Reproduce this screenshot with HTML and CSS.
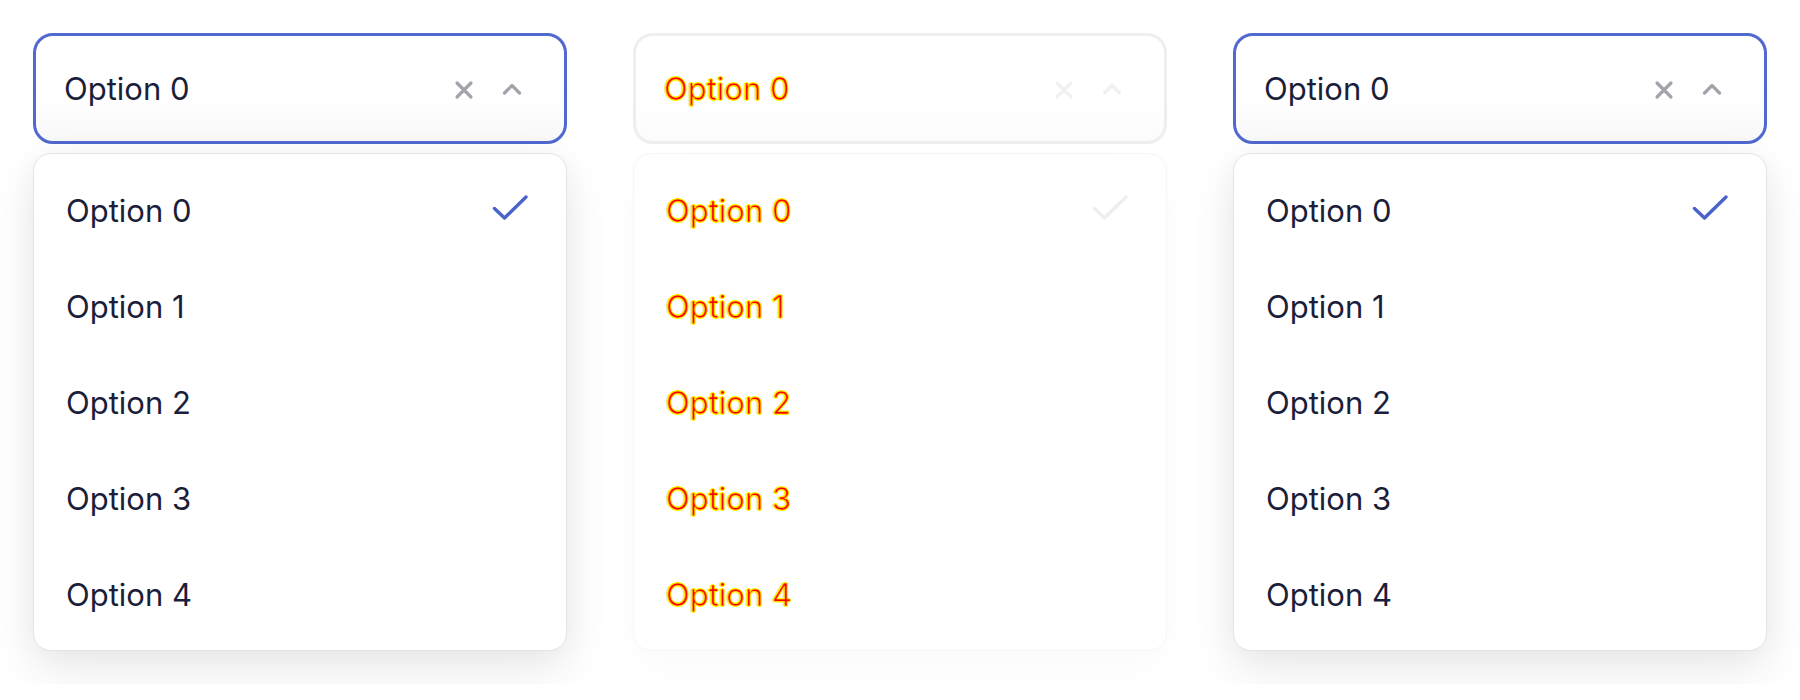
FILE: index.html
```html
<!DOCTYPE html>
<html lang="en">
<head>
<meta charset="utf-8">
<title>Select</title>
<link rel="stylesheet" href="styles.css">
</head>
<body>
<div class="row">
  <div class="select">
    <div class="trigger">
      <span class="value">Option 0</span>
      <div class="icons">
        <svg class="ic-x" width="20" height="20" viewBox="0 0 20 20"><path d="M3 3L17 17M17 3L3 17"/></svg>
        <svg class="ic-chev" width="20" height="12" viewBox="0 0 20 12"><path d="M2.5 10L10 2.5L17.5 10"/></svg>
      </div>
    </div>
    <ul class="menu">
      <li class="option"><span>Option 0</span><svg class="check" width="36" height="26" viewBox="0 0 36 26"><path d="M2.5 13.5L12.5 23L34 2"/></svg></li>
      <li class="option"><span>Option 1</span></li>
      <li class="option"><span>Option 2</span></li>
      <li class="option"><span>Option 3</span></li>
      <li class="option"><span>Option 4</span></li>
    </ul>
  </div>

  <div class="select ghost">
    <div class="trigger">
      <span class="value">Option 0</span>
      <div class="icons">
        <svg class="ic-x" width="20" height="20" viewBox="0 0 20 20"><path d="M3 3L17 17M17 3L3 17"/></svg>
        <svg class="ic-chev" width="20" height="12" viewBox="0 0 20 12"><path d="M2.5 10L10 2.5L17.5 10"/></svg>
      </div>
    </div>
    <ul class="menu">
      <li class="option"><span>Option 0</span><svg class="check" width="36" height="26" viewBox="0 0 36 26"><path d="M2.5 13.5L12.5 23L34 2"/></svg></li>
      <li class="option"><span>Option 1</span></li>
      <li class="option"><span>Option 2</span></li>
      <li class="option"><span>Option 3</span></li>
      <li class="option"><span>Option 4</span></li>
    </ul>
  </div>

  <div class="select">
    <div class="trigger">
      <span class="value">Option 0</span>
      <div class="icons">
        <svg class="ic-x" width="20" height="20" viewBox="0 0 20 20"><path d="M3 3L17 17M17 3L3 17"/></svg>
        <svg class="ic-chev" width="20" height="12" viewBox="0 0 20 12"><path d="M2.5 10L10 2.5L17.5 10"/></svg>
      </div>
    </div>
    <ul class="menu">
      <li class="option"><span>Option 0</span><svg class="check" width="36" height="26" viewBox="0 0 36 26"><path d="M2.5 13.5L12.5 23L34 2"/></svg></li>
      <li class="option"><span>Option 1</span></li>
      <li class="option"><span>Option 2</span></li>
      <li class="option"><span>Option 3</span></li>
      <li class="option"><span>Option 4</span></li>
    </ul>
  </div>
</div>
</body>
</html>
```
FILE: styles.css
```css
* { box-sizing: border-box; }
html, body { margin: 0; background: #ffffff; }
body {
  font-family: "Inter", "Noto Sans", sans-serif;
  color: #1b1e3a;
  overflow: hidden;
}
.row {
  display: flex;
  gap: 66px;
  padding: 33px;
}
.select {
  width: 534px;
  display: flex;
  flex-direction: column;
  gap: 9px;
}
.trigger {
  height: 111px;
  border: 3px solid #5068d0;
  border-radius: 20px;
  background: linear-gradient(#ffffff 55%, #f8f8f8);
  display: flex;
  align-items: center;
  justify-content: space-between;
  padding: 0 42px 0 28px;
}
.value {
  font-size: 31px;
  font-weight: 400;
  letter-spacing: 0;
}
.icons {
  display: flex;
  align-items: center;
  gap: 28px;
}
.icons svg { display: block; fill: none; stroke: #a3a3ad; stroke-width: 3.2; stroke-linecap: round; stroke-linejoin: round; }
.ic-x { margin-top: 2px; }
.menu {
  list-style: none;
  margin: 0;
  padding: 8px;
  background: #ffffff;
  border: 1px solid #e3e3e6;
  border-radius: 18px;
  box-shadow: 0 18px 45px rgba(0, 0, 0, 0.09), 0 0 30px rgba(0, 0, 0, 0.03);
}
.option {
  height: 96px;
  display: flex;
  align-items: center;
  justify-content: space-between;
  padding: 0 30px 0 24px;
  font-size: 31px;
  letter-spacing: 0;
}
.check { display: block; fill: none; stroke: #4a62cb; stroke-width: 3.4; stroke-linecap: round; stroke-linejoin: round; margin-top: -4px; }

/* faded middle copy */
.ghost .trigger {
  border-color: #eeeeef;
  background: linear-gradient(#ffffff 60%, #fcfcfc);
}
.ghost .icons svg { stroke: #f1f1f2; }
.ghost .menu {
  border-color: #f6f6f7;
  box-shadow: 0 18px 45px rgba(0, 0, 0, 0.02);
}
.ghost .check { stroke: #eeeeef; }
.ghost .value,
.ghost .option span {
  color: #ff0000;
  -webkit-text-stroke: 0.7px #ffee00;
  text-shadow: 1px 0 0 #ffff00, -1px 0 0 #ffff00, 0 1px 0 #ffff00, 0 -1px 0 #ffff00, -2px 0 0 #ececec;
}
```
